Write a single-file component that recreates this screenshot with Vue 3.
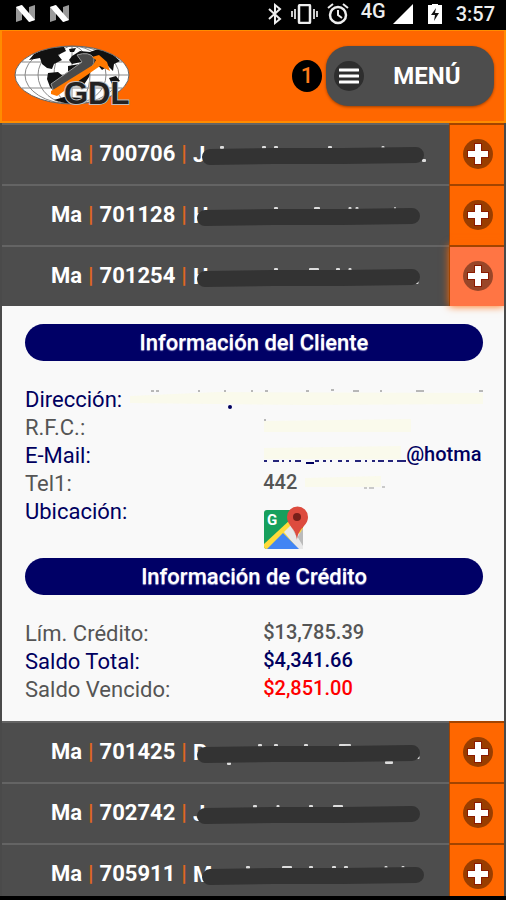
<template>
  <div class="screen">
    <div class="status-bar">
      <div class="status-left">
        <svg v-for="n in 2" :key="n" width="21" height="18" viewBox="0 0 21 18">
          <path d="M1 2L7 0V15L1 17ZM14 2L20 0V15L14 17Z" fill="#999" />
          <path d="M1 2L7 0L20 15L14 17Z" fill="#fff" />
        </svg>
      </div>
      <div class="status-right">
        <svg class="bluetooth" width="14" height="22" viewBox="0 0 14 22">
          <path d="M1 6L12 16L7 20V2L12 6L1 16" fill="none" stroke="#eee" stroke-width="2" />
        </svg>
        <svg class="vibrate" width="27" height="20" viewBox="0 0 27 20">
          <rect x="8" y="1" width="11" height="18" rx="1" fill="none" stroke="#eee" stroke-width="2.5" />
          <path d="M4 5V15M1 7V13M23 5V15M26 7V13" stroke="#ccc" stroke-width="2" />
        </svg>
        <svg class="alarm" width="22" height="22" viewBox="0 0 22 22">
          <circle cx="11" cy="12" r="8" fill="none" stroke="#eee" stroke-width="2.5" />
          <path d="M11 7V12L15 15M1 5L6 1M21 5L16 1" fill="none" stroke="#eee" stroke-width="2" />
        </svg>
        <span class="network">4G</span>
        <svg class="signal" width="20" height="20" viewBox="0 0 20 20">
          <path d="M0 20L20 0V20Z" fill="#fff" />
        </svg>
        <svg class="battery" width="14" height="20" viewBox="0 0 14 20">
          <path d="M4 0H10V1H14V20H0V1H4Z" fill="#fff" />
          <path d="M8 4L3 11H7L6 17L11 9H7Z" fill="#111" />
        </svg>
        <span class="clock">3:57</span>
      </div>
    </div>

    <header class="header">
      <svg class="logo" width="118" height="72" viewBox="0 -4 118 72">
        <defs>
          <clipPath id="globe">
            <ellipse cx="58" cy="31" rx="57" ry="29" />
          </clipPath>
        </defs>
        <ellipse cx="58" cy="31" rx="57" ry="29" fill="#fff" />
        <g clip-path="url(#globe)">
          <g fill="none" stroke="#888" stroke-width="1">
            <ellipse cx="58" cy="31" rx="47" ry="29" />
            <ellipse cx="58" cy="31" rx="34" ry="29" />
            <ellipse cx="58" cy="31" rx="18" ry="29" />
            <path d="M58 2V60M1 31H115M8 18H108M8 44H108" />
          </g>
          <path d="M20 10L33 4L50 3L52 7L44 11L48 16L40 20L38 25L33 24L28 20L26 14L15 16ZM34 29L44 28L50 33L46 41L41 48L36 43L33 35ZM55 5L62 4L60 8L56 8ZM55 16L58 12L66 7L76 8L84 5L97 9L106 17L100 20L99 27L94 22L88 26L83 20L73 22L67 18L58 20ZM54 22L66 20L77 25L75 33L69 42L63 36L54 31ZM95 34L102 32L106 37L98 40ZM40 56L50 53L70 54L58 61Z" fill="#111" />
        </g>
        <ellipse cx="58" cy="31" rx="57" ry="29" fill="none" stroke="#666" stroke-width="1" />
        <path d="M37 40L68 18L63 11Q75 7 80 14Q81 20 77 24L40 48Z" fill="#4a4a4a" stroke="#999" stroke-width="1" />
        <path d="M37 47L42 44L79 21L82 16L78 13L85 11L93 18L96 27L86 22L43 52L37 50Z" fill="#ff7900" />
        <text x="50" y="60" class="logo-text">GDL</text>
      </svg>
      <div class="header-actions">
        <span class="badge">1</span>
        <button class="menu-button" type="button">
          <span class="burger">
            <svg width="20" height="16" viewBox="0 0 20 16">
              <path d="M1 2H19M1 8H19M1 14H19" stroke="#fff" stroke-width="3" stroke-linecap="round" />
            </svg>
          </span>
          <span class="menu-label">MENÚ</span>
        </button>
      </div>
    </header>

    <main class="client-list">
      <section v-for="client in clients" :key="client.id">
        <div class="client-row">
          <h2 class="client-title">
            Ma <span class="bar">|</span> {{ client.id }} <span class="bar">|</span>
            <svg class="hidden-name" width="238" height="30" viewBox="0 0 238 30">
              <text x="0" y="23" class="initial">{{ client.initial }}</text>
              <rect v-for="(m, i) in client.marks" :key="i" :x="m[0] - m[2] / 2" :y="m[1] - 1" :width="m[2]" height="3" rx="1" fill="#ddd" />
              <path :d="`M${client.from} 18L80 17L150 17L${client.to} 16`" class="scribble" />
            </svg>
          </h2>
          <button
            class="toggle"
            :class="{ active: openId === client.id }"
            type="button"
            :aria-expanded="openId === client.id"
            aria-label="Detalle"
            @click="toggle(client.id)"
          >
            <svg width="32" height="32" viewBox="0 0 32 32">
              <circle cx="16" cy="16" r="15" fill="#000" fill-opacity="0.4" />
              <path d="M16 5V27M5 16H27" stroke="#8c1a00" stroke-width="8" />
              <path d="M16 6V26M6 16H26" stroke="#fff" stroke-width="6" />
            </svg>
          </button>
        </div>

        <div v-if="openId === client.id" class="panel">
          <h3 class="pill">Información del Cliente</h3>
          <dl class="info">
            <div class="line blue address">
              <dt>Dirección:</dt>
              <dd>
                <svg width="360" height="28" viewBox="0 0 360 28">
                  <path d="M2 10L90 6L358 7V18L180 19L2 17Z" fill="#fafaec" />
                  <path d="M23 5H26M28 5H31M70 5H72M96 5H98M123 5H125M137 5H140M178 5H181M203 4H206M225 5H231M252 5H254M288 5H296M351 5H355" stroke="#777" stroke-width="1" />
                  <circle cx="102" cy="21" r="2" fill="#00005f" />
                </svg>
              </dd>
            </div>
            <div class="line">
              <dt>R.F.C.:</dt>
              <dd>
                <svg width="150" height="28" viewBox="0 0 150 28">
                  <path d="M1 7L148 5V18H1Z" fill="#fafaec" />
                  <path d="M1 6H3" stroke="#777" stroke-width="1" />
                </svg>
              </dd>
            </div>
            <div class="line blue">
              <dt>E-Mail:</dt>
              <dd>
                <svg width="143" height="28" viewBox="0 0 143 28">
                  <path d="M1 6L138 4V17H1Z" fill="#fafaec" />
                  <path d="M1 19H4M10 19H16M19 19H21M26 19H28M32 19H38M52 19H56M60 19H63M67 19H69M75 19H79M83 19H86M92 19H98M102 19H104M109 19H112M115 19H121M125 19H130M134 19H143" stroke="#24247a" stroke-width="2" />
                  <path d="M43 21H51" stroke="#00005f" stroke-width="2" />
                </svg>
                <span>@hotma</span>
              </dd>
            </div>
            <div class="line">
              <dt>Tel1:</dt>
              <dd>
                <span>442</span>
                <svg width="90" height="28" viewBox="0 0 90 28">
                  <path d="M8 8L84 6V17H8Z" fill="#fafaec" />
                  <path d="M67 18H70M72 18H77M85 17H88" stroke="#999" stroke-width="1" />
                </svg>
              </dd>
            </div>
            <div class="line blue">
              <dt>Ubicación:</dt>
              <dd class="map">
                <a href="#" aria-label="Ver en el mapa">
                  <svg width="46" height="44" viewBox="0 0 46 44">
                    <path d="M4 4H40V43H4Q1 43 1 40V7Q1 4 4 4Z" fill="#17a05d" />
                    <path d="M1 38L28 13L40 22V43H4Q1 43 1 40Z" fill="#ffdb3a" />
                    <path d="M21 26L28 19L40 31V43H35Z" fill="#e8e8e8" />
                    <path d="M28 20L34 32L40 22V40Z" fill="#bbb" />
                    <path d="M4 43L20 27L36 43Z" fill="#4285f4" />
                    <text x="4" y="19" class="map-letter">G</text>
                    <path d="M34 34C33 22 24 20 24 11A10 10 0 0 1 45 11C45 20 35 22 34 34Z" fill="#dd4b3e" />
                    <circle cx="34" cy="11" r="4" fill="#781f19" />
                  </svg>
                </a>
              </dd>
            </div>
          </dl>

          <h3 class="pill">Información de Crédito</h3>
          <dl class="info">
            <div v-for="item in credit" :key="item.label" class="line" :class="item.color">
              <dt>{{ item.label }}</dt>
              <dd>{{ item.value }}</dd>
            </div>
          </dl>
        </div>
      </section>
    </main>
  </div>
</template>

<script setup>
import { ref } from "vue";

// marks: [x, y, width] of the bits of each name left outside the scribble
const clients = [
  { id: "700706", initial: "J", from: 17, to: 223, marks: [[29, 8, 4], [71, 8, 4], [83, 8, 4], [137, 8, 4], [190, 8, 3], [231, 21, 4]] },
  { id: "701128", initial: "H", from: 12, to: 219, marks: [[83, 8, 4], [124, 8, 6], [157, 8, 3], [164, 8, 3], [202, 8, 2]] },
  { id: "701254", initial: "H", from: 12, to: 219, marks: [[83, 8, 4], [121, 8, 10], [145, 8, 4], [157, 8, 3], [224, 21, 3]] },
  { id: "701425", initial: "R", from: 12, to: 219, marks: [[36, 26, 4], [67, 8, 4], [83, 8, 4], [113, 8, 4], [152, 8, 12], [196, 25, 8], [225, 20, 3]] },
  { id: "702742", initial: "J", from: 12, to: 219, marks: [[62, 8, 4], [85, 8, 3], [118, 8, 4], [145, 8, 10]] },
  { id: "705911", initial: "M", from: 17, to: 223, marks: [[55, 8, 4], [94, 8, 10], [118, 8, 4], [141, 8, 4], [153, 8, 4], [193, 8, 3], [210, 8, 3]] },
];

const credit = [
  { label: "Lím. Crédito:", value: "$13,785.39", color: "" },
  { label: "Saldo Total:", value: "$4,341.66", color: "blue" },
  { label: "Saldo Vencido:", value: "$2,851.00", color: "overdue" },
];

const openId = ref("701254");

const toggle = (id) => {
  openId.value = openId.value === id ? null : id;
};
</script>

<style>
body {
  background: #000;
}
</style>

<style scoped>
.screen {
  display: flex;
  flex-direction: column;
  height: 100vh;
  box-sizing: border-box;
  border-bottom: 4px solid #000;
  font-family: Roboto, "Liberation Sans", sans-serif;
}

svg {
  display: block;
  flex: none;
}

.status-bar {
  display: flex;
  justify-content: space-between;
  align-items: center;
  flex: none;
  height: 30px;
  padding: 0 11px 2px 15px;
  box-sizing: border-box;
  background: #000;
  color: #eee;
}

.status-left {
  display: flex;
  gap: 13px;
}

.status-right {
  display: flex;
  align-items: center;
}

.vibrate {
  margin-left: 9px;
}

.alarm {
  margin-left: 9px;
}

.network {
  align-self: flex-start;
  margin: 0 7px 0 12px;
  font-size: 20px;
  font-weight: 500;
  line-height: 18px;
}

.battery {
  margin: 0 14px 0 15px;
}

.clock {
  font-size: 20px;
  font-weight: 500;
}

.header {
  display: flex;
  justify-content: space-between;
  align-items: center;
  flex: none;
  height: 93px;
  box-sizing: border-box;
  padding: 0 10px 0 12px;
  background: #ff6700;
  border: 2px solid #ff8c00;
  border-top-width: 1px;
}

.logo-text {
  font-family: "Liberation Sans", sans-serif;
  font-size: 31px;
  font-weight: 700;
  fill: #222;
  stroke: #bbb;
  stroke-width: 2px;
  paint-order: stroke;
}

.header-actions {
  display: flex;
  align-items: center;
  gap: 4px;
}

.badge {
  width: 30px;
  border-radius: 50%;
  background: #000;
  color: #ff7a1a;
  font-size: 22px;
  font-weight: 500;
  line-height: 32px;
  text-align: center;
}

.menu-button {
  display: flex;
  align-items: center;
  width: 168px;
  height: 60px;
  padding: 0 8px;
  border: none;
  border-radius: 22px;
  background: #4d4d4d;
  box-shadow: 0 1px 3px rgba(0, 0, 0, 0.4);
  color: #fff;
  font-family: inherit;
  cursor: pointer;
}

.burger {
  display: flex;
  align-items: center;
  justify-content: center;
  width: 30px;
  height: 30px;
  border-radius: 50%;
  background: #2e2e2e;
}

.menu-label {
  flex: 1;
  padding-left: 4px;
  font-size: 24px;
  font-weight: 700;
}

.client-list {
  flex: 1;
  min-height: 0;
  overflow-y: auto;
  scrollbar-width: none;
  border: solid #4a4a4a;
  border-width: 0 2px;
  background: #4d4d4d;
}

.client-row {
  display: flex;
  height: 61px;
}

.client-title {
  display: flex;
  align-items: center;
  flex: 1;
  gap: 6px;
  min-width: 0;
  box-sizing: border-box;
  margin: 0;
  padding: 0 0 2px 49px;
  border-top: 2px solid #646464;
  overflow: hidden;
  color: #fff;
  font-size: 22px;
  font-weight: 700;
  white-space: nowrap;
}

.bar {
  color: #e0671f;
}

.initial {
  font-family: Roboto, "Liberation Sans", sans-serif;
  font-size: 22px;
  font-weight: 700;
  fill: #fff;
}

.scribble {
  fill: none;
  stroke: #333;
  stroke-width: 16px;
  stroke-linecap: round;
}

.toggle {
  display: flex;
  align-items: center;
  justify-content: center;
  flex: none;
  width: 55px;
  padding: 0 0 2px 2px;
  border: solid #a34400;
  border-width: 2px 0 0 1px;
  background: #ff6700;
  cursor: pointer;
}

.toggle.active {
  background: #ff7544;
  box-shadow: 0 0 8px #ff6700;
}

.panel {
  padding: 18px 21px 17px 23px;
  background: #f9f9f9;
}

.pill {
  margin: 0;
  border-radius: 19px;
  background: #000066;
  color: #fff;
  font-size: 22px;
  font-weight: 500;
  line-height: 37px;
  text-align: center;
  text-shadow: 0 1px 1px #99c;
}

.info {
  margin: 25px 0 8px;
}

.info:last-child {
  margin-bottom: 0;
}

.line {
  display: grid;
  grid-template-columns: 52% 48%;
  color: #555;
  line-height: 28px;
}

.line dt {
  font-size: 22px;
}

.line dd {
  display: flex;
  margin: 0;
  overflow: hidden;
  font-size: 20px;
  font-weight: 500;
  line-height: 24px;
}

.line.blue {
  color: #00005f;
}

.line.overdue dd {
  color: #f00;
}

.line.address {
  grid-template-columns: 103px 1fr;
}

.line .map {
  padding-top: 8px;
}

.map-letter {
  font-family: Roboto, "Liberation Sans", sans-serif;
  font-size: 15px;
  font-weight: 700;
  fill: #fff;
}
</style>
